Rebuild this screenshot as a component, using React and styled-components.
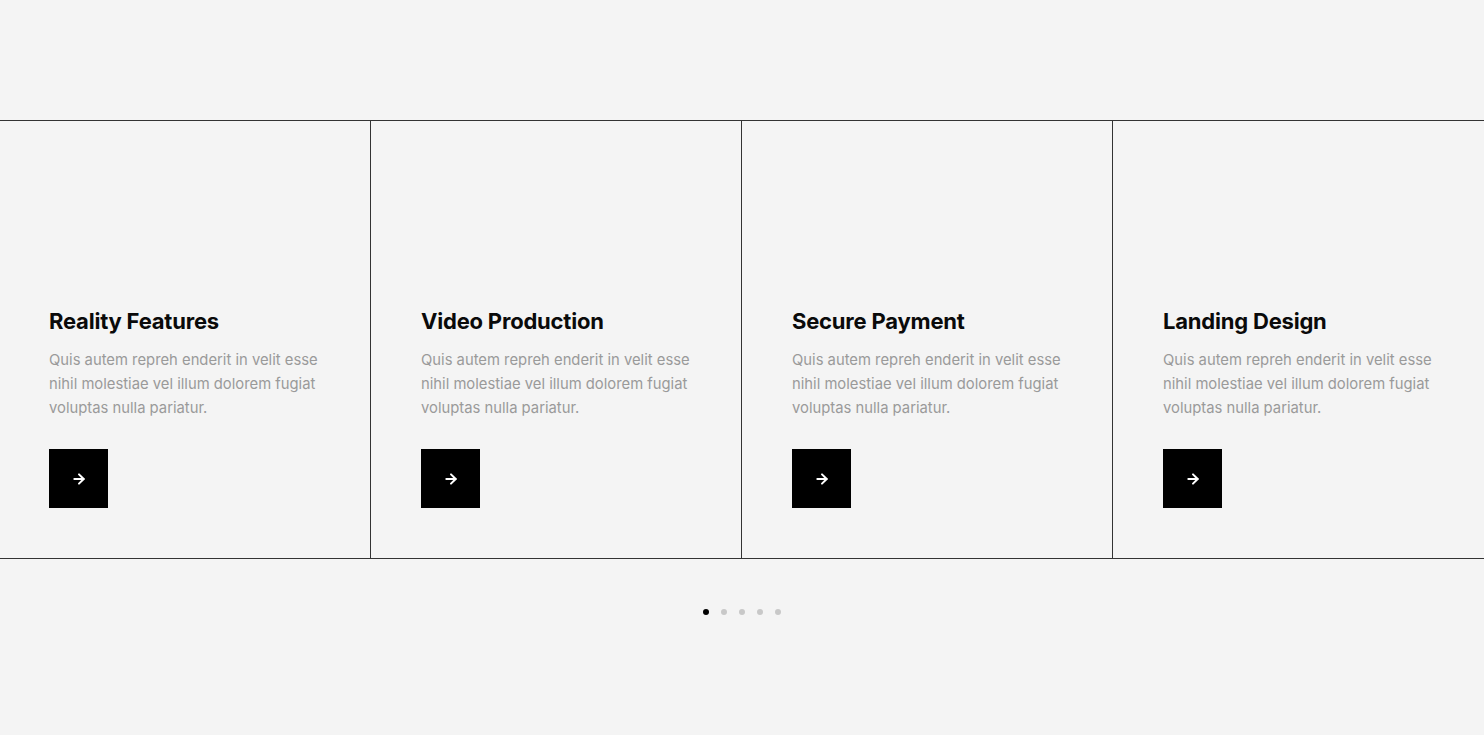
import React from "react";
import styled, { createGlobalStyle } from "styled-components";
import { ArrowRight } from "lucide-react";

const Global = createGlobalStyle`
  html, body {
    margin: 0;
    padding: 0;
    background: #f4f4f4;
    font-family: Inter, "Noto Sans", sans-serif;
  }
`;

const Page = styled.div`
  padding-top: 120px;
  min-height: 735px;
  box-sizing: border-box;
`;

const Track = styled.div`
  display: grid;
  grid-template-columns: repeat(4, 1fr);
  border-top: 1px solid #333;
  border-bottom: 1px solid #333;
`;

const Slide = styled.div`
  height: 437px;
  box-sizing: border-box;
  padding: 0 30px 50px 50px;
  display: flex;
  flex-direction: column;
  justify-content: flex-end;
  border-right: ${(p) => (p.$last ? "none" : "1px solid #333")};
  &:first-child {
    padding-left: 49px;
  }
`;

const Title = styled.h3`
  margin: 0;
  font-size: 22px;
  line-height: 28px;
  font-weight: 700;
  color: #0a0a0a;
  letter-spacing: -0.2px;
`;

const Text = styled.p`
  margin: 13px 0 0;
  font-size: 14.8px;
  line-height: 24px;
  color: #9a9a9a;
`;

const Button = styled.button`
  margin-top: 29px;
  width: 59px;
  height: 59px;
  border: none;
  background: #000;
  color: #fff;
  display: flex;
  align-items: center;
  justify-content: center;
  cursor: pointer;
  padding: 0;
`;

const Dots = styled.div`
  display: flex;
  justify-content: center;
  gap: 12px;
  margin-top: 50px;
`;

const Dot = styled.span`
  width: 6px;
  height: 6px;
  border-radius: 50%;
  background: ${(p) => (p.$active ? "#000" : "#c8c8c8")};
`;

const slides = [
  "Reality Features",
  "Video Production",
  "Secure Payment",
  "Landing Design",
];

export default function App() {
  return (
    <>
      <Global />
      <Page>
        <Track>
          {slides.map((t, i) => (
            <Slide key={t} $last={i === slides.length - 1}>
              <Title>{t}</Title>
              <Text>
                Quis autem repreh enderit in velit esse
                <br />
                nihil molestiae vel illum dolorem fugiat
                <br />
                voluptas nulla pariatur.
              </Text>
              <Button aria-label="more">
                <ArrowRight size={16} strokeWidth={3} />
              </Button>
            </Slide>
          ))}
        </Track>
        <Dots>
          {[0, 1, 2, 3, 4].map((d) => (
            <Dot key={d} $active={d === 0} />
          ))}
        </Dots>
      </Page>
    </>
  );
}
